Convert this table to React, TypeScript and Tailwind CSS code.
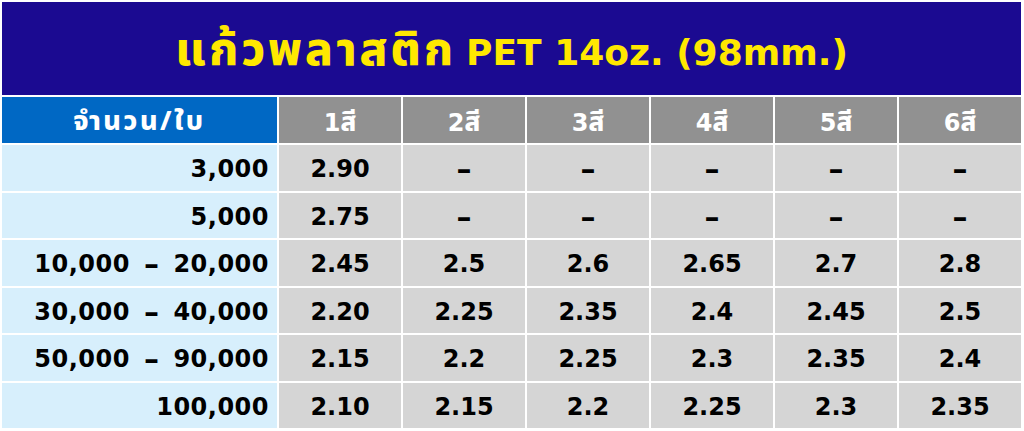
import React from "react";

const latin = { fontFamily: '"DejaVu Sans", "Noto Sans Thai", "Noto Sans", sans-serif' };
const thai = { fontFamily: '"Noto Sans Thai", "Noto Sans", sans-serif' };

const rows: [string, string[]][] = [
  ["3,000", ["2.90", "–", "–", "–", "–", "–"]],
  ["5,000", ["2.75", "–", "–", "–", "–", "–"]],
  ["10,000 – 20,000", ["2.45", "2.5", "2.6", "2.65", "2.7", "2.8"]],
  ["30,000 – 40,000", ["2.20", "2.25", "2.35", "2.4", "2.45", "2.5"]],
  ["50,000 – 90,000", ["2.15", "2.2", "2.25", "2.3", "2.35", "2.4"]],
  ["100,000", ["2.10", "2.15", "2.2", "2.25", "2.3", "2.35"]],
];

const heads = ["1", "2", "3", "4", "5", "6"];

function Qty({ q }: { q: string }) {
  const parts = q.split(" – ");
  if (parts.length === 1) return <>{q}</>;
  return (
    <>
      {parts[0]}
      <span className="text-[30px] mx-[14px]">–</span>
      {parts[1]}
    </>
  );
}

export default function App() {
  return (
    <div
      className="w-[1024px] h-[431px] bg-white pt-[2px] pl-[2px] pr-[3px] pb-[3px] flex flex-col gap-[2px] overflow-hidden"
      style={latin}
    >
      <div className="h-[93px] shrink-0 bg-[#1b0a91] flex items-center justify-center pt-[4px]">
        <span className="text-[#ffe800] font-bold leading-none whitespace-nowrap flex items-baseline">
          <span className="text-[46px] font-extrabold tracking-[3px]" style={thai}>
            แก้วพลาสติก
          </span>
          <span className="text-[36px] ml-[10px]">PET 14oz. (98mm.)</span>
        </span>
      </div>
      <div className="flex-1 grid grid-cols-[275px_repeat(6,1fr)] grid-rows-[46px_repeat(6,1fr)] gap-[2px]">
        <div className="bg-[#0068c4] text-white flex items-center justify-center leading-none pt-[2px]">
          <span className="text-[27px] font-extrabold tracking-[2.5px]" style={thai}>
            จำนวน/ใบ
          </span>
        </div>
        {heads.map((h) => (
          <div
            key={h}
            className="bg-[#919191] text-white flex items-baseline justify-center leading-none pt-[13px]"
          >
            <span className="text-[24px] font-bold">{h}</span>
            <span className="text-[26px] font-extrabold" style={thai}>
              สี
            </span>
          </div>
        ))}
        {rows.map(([q, vals]) => (
          <React.Fragment key={q}>
            <div className="bg-[#d7effc] text-black text-[24px] font-bold flex items-center justify-end pr-[8px] pt-[3px] leading-none tracking-[0.5px]">
              <Qty q={q} />
            </div>
            {vals.map((v, i) => (
              <div
                key={i}
                className={`bg-[#d5d5d5] text-black font-bold flex items-center justify-center leading-none pt-[3px] ${
                  v === "–" ? "text-[30px]" : "text-[24px]"
                }`}
              >
                {v}
              </div>
            ))}
          </React.Fragment>
        ))}
      </div>
    </div>
  );
}
